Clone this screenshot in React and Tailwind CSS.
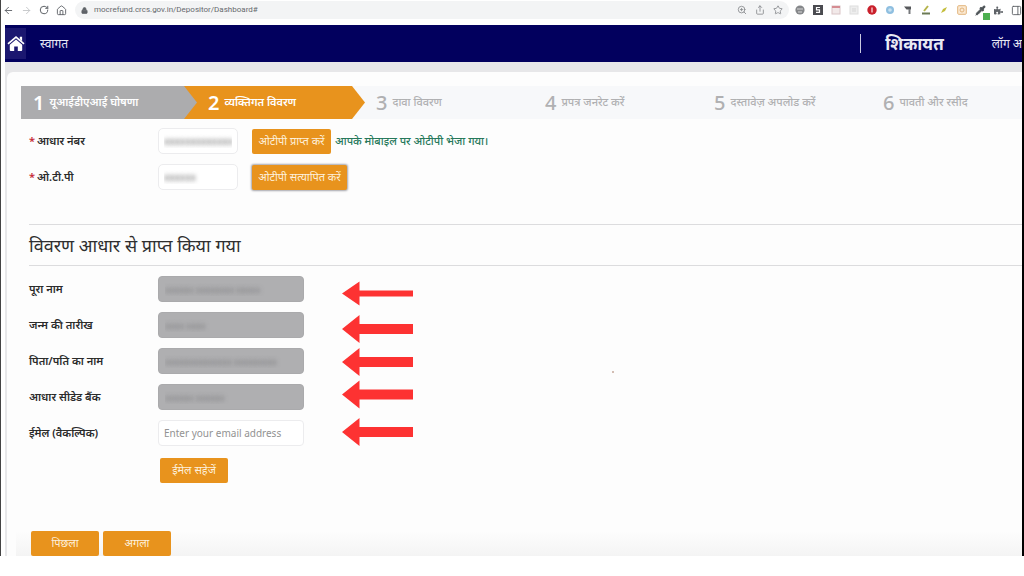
import React from "react";
import { FaPuzzlePiece } from "react-icons/fa";
import { ArrowLeft, ArrowRight, RotateCw, House, Lock, ZoomIn, Share, Star, PanelRight, Pipette } from "lucide-react";

const steps = [
  { n: 1, label: "यूआईडीएआई घोषणा" },
  { n: 2, label: "व्यक्तिगत विवरण" },
  { n: 3, label: "दावा विवरण" },
  { n: 4, label: "प्रपत्र जनरेट करें" },
  { n: 5, label: "दस्तावेज़ अपलोड करें" },
  { n: 6, label: "पावती और रसीद" },
];

const details = [
  { id: "name", label: "पूरा नाम", value: "xxxxxx xxxxxxxx xxxxx" },
  { id: "dob", label: "जन्म की तारीख", value: "xxxx xxxx" },
  { id: "father", label: "पिता/पति का नाम", value: "xxxxxxxxxxxxxx xxxxxxxxx" },
  { id: "bank", label: "आधार सीडेड बैंक", value: "xxxxxx xxxxxx" },
];

function BrowserBar() {
  return (
    <div className="flex h-[25px] shrink-0 items-start bg-white pt-px pl-0.5 text-[#5f6368]">
      <div className="flex h-[18px] items-center gap-[7px]">
        <button aria-label="Back"><ArrowLeft size={11} /></button>
        <button aria-label="Forward" className="text-[#c4c6c8]"><ArrowRight size={11} /></button>
        <button aria-label="Reload"><RotateCw size={10} strokeWidth={2.4} /></button>
        <button aria-label="Home"><House size={11} /></button>
      </div>
      <div className="ml-2 flex h-[18px] flex-1 items-center rounded-full bg-[#f3f4f5] pr-1.5 pl-1.5">
        <Lock size={7} fill="#5f6368" strokeWidth={2.5} />
        <input
          aria-label="Address"
          readOnly
          defaultValue="mocrefund.crcs.gov.in/Depositor/Dashboard#"
          className="ml-1.5 min-w-0 flex-1 bg-transparent font-['Roboto',sans-serif] text-[8px] text-[#66696d] outline-none"
        />
        <div className="flex items-center gap-2 text-[#85888c]">
          <button aria-label="Zoom"><ZoomIn size={10} /></button>
          <button aria-label="Share"><Share size={10} /></button>
          <button aria-label="Bookmark"><Star size={10} /></button>
        </div>
      </div>
      <div className="ml-1.5 flex h-[18px] items-center gap-2">
        <svg width="10" height="10" viewBox="0 0 10 10"><circle cx="5" cy="5" r="4.6" fill="#85878a" /><path d="M2 4h6M3 7h4" stroke="#d8d8d8" strokeWidth="1.2" /></svg>
        <svg width="10" height="10" viewBox="0 0 10 10"><rect width="10" height="10" fill="#4a4b50" /><path d="M7 2.5H3.5v2.3h3v2.5H3" fill="none" stroke="#fff" strokeWidth="1.2" /></svg>
        <svg width="10" height="10" viewBox="0 0 10 10"><rect x="1" y="1" width="8" height="8" fill="#f2e9e9" stroke="#d9c4c6" /><path d="M1 2h8" stroke="#d58c92" strokeWidth="2" /></svg>
        <svg width="10" height="10" viewBox="0 0 10 10"><rect x="1" y="1" width="8" height="8" fill="#eeeeee" stroke="#dedede" /><path d="M3 4h4M3 6h4" stroke="#d5d5d5" /></svg>
        <svg width="10" height="10" viewBox="0 0 10 10"><circle cx="5" cy="5" r="4.7" fill="#c9202c" /><path d="M5 2.5v5" stroke="#f4bcc0" strokeWidth="1.5" /></svg>
        <svg width="10" height="10" viewBox="0 0 10 10"><circle cx="5" cy="5" r="4" fill="#8fbfe0" /><circle cx="5" cy="5" r="1.8" fill="#c9e1f0" /></svg>
        <svg width="10" height="10" viewBox="0 0 10 10"><path d="M1 1.500h7v3H3.500z" fill="#56585b" /><path d="M6.500 4v5" stroke="#77797c" strokeWidth="2" /></svg>
        <svg width="10" height="10" viewBox="0 0 10 10"><path d="M3 6 7 1" stroke="#b5b34a" strokeWidth="2" /><path d="M1 8.500h8" stroke="#6b7a55" strokeWidth="2" /></svg>
        <svg width="10" height="10" viewBox="0 0 10 10"><path d="M2 8 4 4l4-2-2 4z" fill="#c3bd3a" /></svg>
        <svg width="10" height="10" viewBox="0 0 10 10"><rect x=".7" y=".7" width="8.600" height="8.600" rx="1" fill="#fbe9d2" stroke="#e2b47c" /><circle cx="5" cy="5" r="2" fill="none" stroke="#e2b47c" /></svg>
        <span className="relative block text-[#4d5357]">
          <Pipette size={11} fill="#4d5357" />
          <span className="absolute -right-1 -bottom-1 size-[7px] bg-[#4caf50]" />
        </span>
        <FaPuzzlePiece size={9} />
        <PanelRight size={11} />
      </div>
    </div>
  );
}

function Header() {
  return (
    <header className="ml-1 flex h-[37px] shrink-0 items-center bg-[#02005e] text-[#e9e9f4]">
      <a href="#home" aria-label="Home" className="flex h-[31px] w-[21px] shrink-0 items-center justify-center bg-[#1b1770] text-white">
        <svg width="18" height="15" viewBox="0 0 18 15" fill="currentColor">
          <path d="M9 3.500 2.800 8.800V14q0 1 1 1h3.400v-4.500h3.600V15h3.400q1 0 1-1V8.800z" />
          <path d="M1 7.900 9 1.200l8 6.700" fill="none" stroke="currentColor" strokeWidth="1.700" />
          <path d="M12.800.8h2.300v4.500l-2.300-2z" />
        </svg>
      </a>
      <span className="ml-3.5 text-[12px]">स्वागत</span>
      <span className="ml-auto h-[19px] w-px bg-[#c9c9e0]" />
      <a href="#complaint" className="ml-6 text-[17px] font-bold whitespace-nowrap">शिकायत</a>
      <a href="#logout" className="ml-12 text-[12px] whitespace-nowrap">लॉग अ</a>
    </header>
  );
}

function Stepper() {
  return (
    <ol className="ml-[5px] grid h-[33px] grid-cols-[163fr_168fr_169fr_169fr_169fr_163fr] bg-[#f7f8fa]">
      {steps.map((s, i) => {
        const tone =
          i === 0 ? "pl-3 bg-[#acacae] text-white font-semibold" :
          i === 1 ? "pl-6 bg-[#e8931d] text-white font-semibold" :
          "pl-6 text-[#b0b0b2] font-medium";
        return (
          <li key={s.n} className={"relative flex min-w-0 items-center gap-[5px] whitespace-nowrap " + tone}>
            <span className="text-[20px] leading-none">{s.n}</span>
            <span className="text-[11px]">{s.label}</span>
            {i < 2 && (
              <svg className={"absolute top-0 left-full z-10 " + (i === 0 ? "text-[#acacae]" : "text-[#e8931d]")} width="13" height="33" viewBox="0 0 13 33" fill="currentColor">
                <path d="M0 0 13 16.500 0 33z" />
              </svg>
            )}
          </li>
        );
      })}
    </ol>
  );
}

function Label({ id, required, children }) {
  return (
    <label htmlFor={id} className="w-[129px] shrink-0 text-[11px] font-semibold whitespace-nowrap text-[#2b2b2b]">
      {required && <span className="mr-0.5 text-[#c62a35]">*</span>}
      {children}
    </label>
  );
}

function Button({ className = "", children }) {
  return (
    <button className={"h-[25px] rounded-[2px] bg-[#e8931d] text-[11px] whitespace-nowrap text-[#fdf0dc] " + className}>{children}</button>
  );
}

const small = "h-[26px] w-20 rounded-[5px] border border-[#ececee] bg-white px-[5px] text-[10px] text-transparent outline-none [text-shadow:0_0_4px_#666]";

function Arrows() {
  const arrows = [[23.500, 3, 12], [59, 5, 14], [92, 5, 14], [124.500, 5, 14], [162, 5, 14]];
  return (
    <svg className="absolute top-1 left-[313px]" width="72" height="180" viewBox="0 0 72 180" fill="#fd3232" aria-hidden="true">
      {arrows.map(([y, half, head]) => (
        <path key={y} d={`M0 ${y}L17.500 ${y - head}V${y - half}H71V${y + half}H17.500V${y + head}z`} />
      ))}
    </svg>
  );
}

export default function App() {
  return (
    <div className="min-h-screen bg-white font-['Noto_Sans','Open_Sans',sans-serif]">
      <div className="flex flex-col overflow-hidden border-r-2 border-l border-r-black border-l-[#444]">
        <BrowserBar />
        <Header />
        <div className="ml-1 bg-[#e7e7e9] pt-2.5 pl-0.5">
          <main className="rounded-tl-[6px] bg-[#fdfdfd] pt-3.5 pl-[9px]">
            <Stepper />
            <div className="pl-[13px]">
              <div className="mt-[9px] flex items-center">
                <Label id="aadhaar" required>आधार नंबर</Label>
                <input id="aadhaar" readOnly defaultValue="xxxxxxxxxxxxx" className={small} />
                <Button className="ml-3.5 w-[79px]">ओटीपी प्राप्त करें</Button>
                <p role="status" className="ml-1 text-[11px] font-medium text-[#26785a]">आपके मोबाइल पर ओटीपी भेजा गया।</p>
              </div>
              <div className="mt-2.5 flex items-center">
                <Label id="otp" required>ओ.टी.पी</Label>
                <input id="otp" readOnly defaultValue="xxxxxx" className={small} />
                <Button className="ml-3.5 w-[95px] shadow-[0_0_2px_1px_#a5a5ab]">ओटीपी सत्यापित करें</Button>
              </div>
              <h2 className="mt-[34px] flex h-[42px] items-center border-y border-[#dcdcde] text-[18px] text-[#2f2f2f]">विवरण आधार से प्राप्त किया गया</h2>
              <div className="relative flex flex-col gap-2.5 pt-2.5">
                {details.map((d) => (
                  <div key={d.id} className="flex items-center">
                    <Label id={d.id}>{d.label}</Label>
                    <input id={d.id} readOnly defaultValue={d.value} className="h-[26px] w-[146px] rounded-[4px] border border-[#aaaaac] bg-[#afafb1] px-1.5 text-[9px] text-transparent outline-none [text-shadow:0_0_4px_#77777a]" />
                  </div>
                ))}
                <div className="flex items-center">
                  <Label id="email">ईमेल (वैकल्पिक)</Label>
                  <input id="email" type="email" placeholder="Enter your email address" className="h-[26px] w-[146px] rounded-[4px] border border-[#ececee] bg-white px-[5px] text-[10px] outline-none placeholder:text-[#929292]" />
                </div>
                <Arrows />
                <span className="absolute top-[105px] left-[583px] size-0.5 rounded-full bg-[#c4a79a]" aria-hidden="true" />
              </div>
              <Button className="mt-3 ml-[131px] block w-[68px]">ईमेल सहेजें</Button>
            </div>
            <div className="mt-12 flex gap-1 bg-linear-to-b from-[#fdfdfd] to-[#f4f4f4] pl-[15px]">
              <Button className="w-[68px]">पिछला</Button>
              <Button className="w-[68px]">अगला</Button>
            </div>
          </main>
        </div>
      </div>
    </div>
  );
}
